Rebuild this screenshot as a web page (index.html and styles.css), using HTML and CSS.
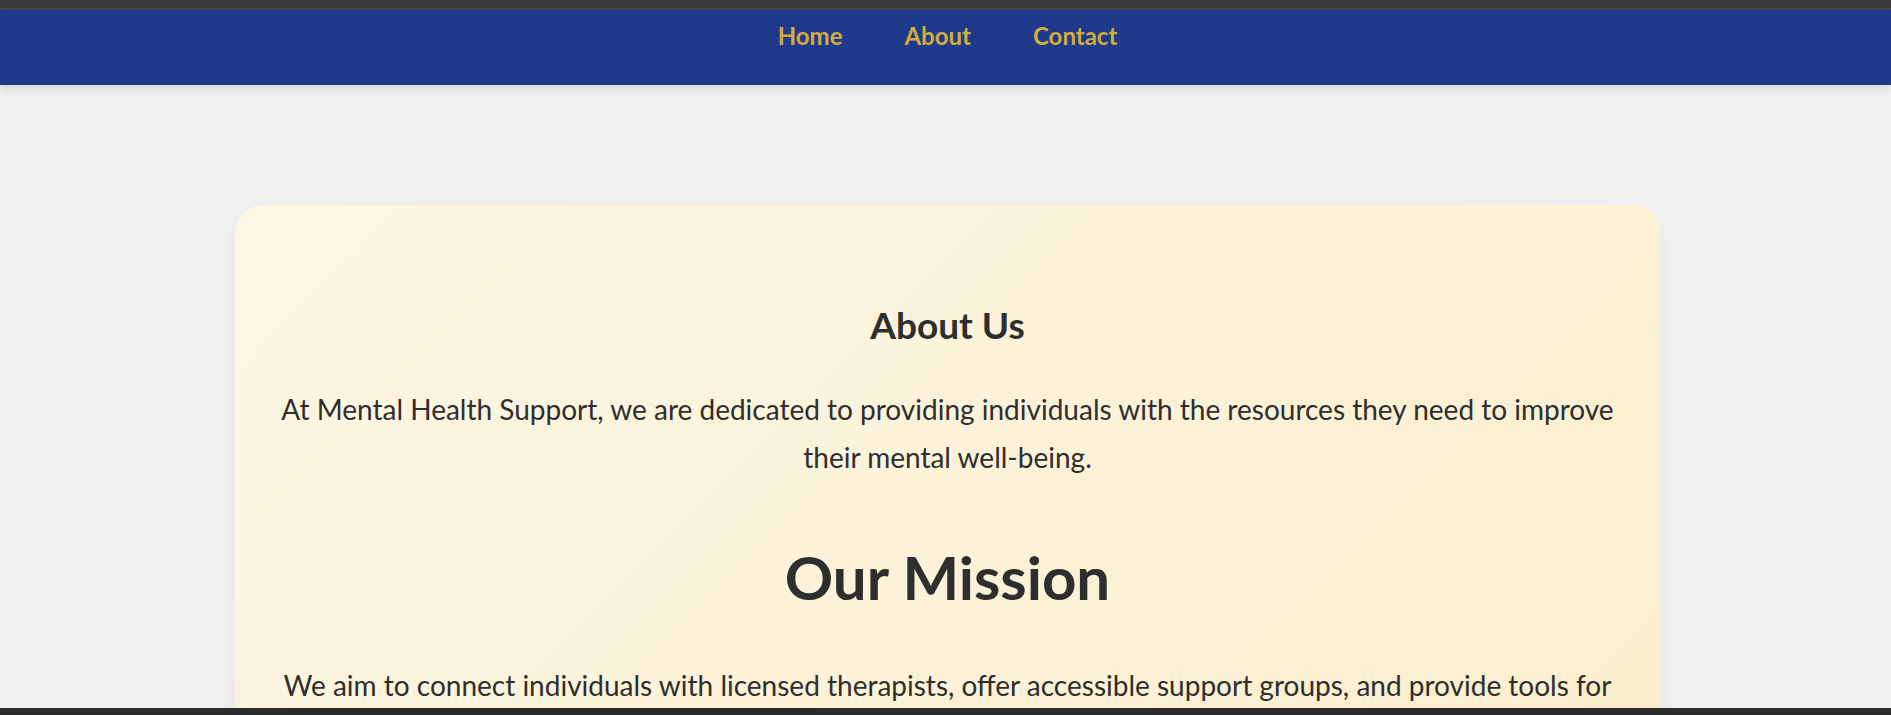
FILE: index.html
```html
<!DOCTYPE html>
<html lang="en">
<head>
<meta charset="utf-8">
<title>Mental Health Support - About</title>
<link rel="stylesheet" href="styles.css">
</head>
<body>
<div class="chrome-top"></div>
<header class="site-header">
  <nav class="nav">
    <a class="nav-link" href="#">Home</a>
    <a class="nav-link" href="#">About</a>
    <a class="nav-link" href="#">Contact</a>
  </nav>
</header>
<main class="main">
  <section class="card">
    <h2 class="card-title">About Us</h2>
    <p class="card-text">At Mental Health Support, we are dedicated to providing individuals with the resources they need to improve their mental well-being.</p>
    <h1 class="card-heading">Our Mission</h1>
    <p class="card-text card-text-mission">We aim to connect individuals with licensed therapists, offer accessible support groups, and provide tools for self-care and personal growth.</p>
  </section>
</main>
<div class="chrome-bottom"></div>
</body>
</html>
```

FILE: styles.css
```css
html, body {
  margin: 0;
  padding: 0;
  overflow: hidden;
  height: 715px;
}
body {
  background: #f1f1f1;
  font-family: "Lato", "Open Sans", sans-serif;
  color: #2e2e2e;
}
.chrome-top {
  height: 8px;
  background: #3c3c3c;
  border-bottom: 2px solid #4a4a4a;
}
.site-header {
  background: #1e3a8a;
  height: 75px;
  box-sizing: border-box;
  padding-top: 11px;
  box-shadow: 0 3px 10px rgba(0, 0, 0, 0.12);
  position: relative;
  z-index: 1;
}
.nav {
  display: flex;
  justify-content: center;
  gap: 62px;
  padding-left: 4px;
}
.nav-link {
  color: #d4ab3c;
  text-decoration: none;
  font-weight: 700;
  font-size: 24px;
  line-height: 30px;
}
.main {
  display: flex;
  justify-content: center;
  padding: 120px 0 0 4px;
}
.card {
  width: 1425px;
  box-sizing: border-box;
  padding: 98px 40px 60px;
  border-radius: 28px;
  background: linear-gradient(135deg, #fdf6e4 0%, #fbf1d6 60%, #f9edc9 100%);
  box-shadow: 0 6px 24px rgba(0, 0, 0, 0.06);
  text-align: center;
}
.card-title {
  margin: 0 0 38px;
  font-size: 37px;
  line-height: 44px;
  font-weight: 700;
}
.card-text {
  margin: 0 0 60px;
  font-size: 28px;
  line-height: 48px;
}
.card-heading {
  margin: 0 0 48px;
  font-size: 60px;
  line-height: 72px;
  font-weight: 700;
}
.chrome-bottom {
  position: fixed;
  left: 0;
  right: 0;
  bottom: 0;
  height: 7px;
  background: #2b2b2b;
  z-index: 5;
}
```
